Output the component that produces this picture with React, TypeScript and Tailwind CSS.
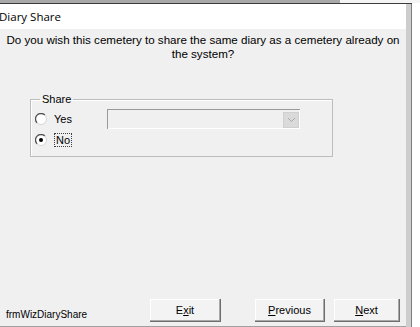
import React from "react";

const Radio = ({ checked }: { checked: boolean }) => (
  <svg width="12" height="12" viewBox="0 0 12 12" className="shrink-0">
    <circle cx="6" cy="6" r="5.5" fill="#ffffff" />
    <path d="M2.1 9.9 A5.5 5.5 0 0 1 9.9 2.1" fill="none" stroke="#505050" strokeWidth="1.3" />
    <path d="M9.9 2.1 A5.5 5.5 0 0 1 2.1 9.9" fill="none" stroke="#d4d4d4" strokeWidth="1" />
    {checked && <circle cx="6" cy="6" r="2" fill="#000000" />}
  </svg>
);

const WinButton = ({ width, children }: { width: string; children: React.ReactNode }) => (
  <button
    className={`${width} h-[23px] bg-[#f3f3f3] border-r border-b border-[#6e6e6e] shadow-[inset_-1px_-1px_#a9a9a9,inset_1px_1px_#ffffff] text-[11px] text-black leading-none flex items-center justify-center`}
  >
    {children}
  </button>
);

export default function App() {
  return (
    <div className="w-[420px] h-[327px] bg-white overflow-hidden flex flex-col font-['Liberation_Sans',Arial,sans-serif] text-black">
      {/* top edge */}
      <div className="flex h-[3px]">
        <div className="w-[340px] bg-[#a8a8a8]" />
        <div className="flex-1 bg-[#f4f4f4]" />
      </div>
      <div className="w-[412px] h-px bg-[#3c3c3c]" />

      <div className="flex flex-1 min-h-0">
        <div className="w-[406px] flex flex-col">
          {/* title bar */}
          <div className="h-[25px] bg-white flex items-center -ml-[1px]">
            <span className="text-[11.5px] font-['Open_Sans',sans-serif]">Diary Share</span>
          </div>

          {/* body */}
          <div className="flex-1 bg-[#f0f0f0] flex flex-col">
            <p className="pt-[4px] text-center text-[11.6px] leading-[14px]">
              Do you wish this cemetery to share the same diary as a cemetery already on
              <br />
              the system?
            </p>

            <fieldset className="ml-[30px] mt-[32px] w-[303px] border border-[#bdbdbd] shadow-[inset_1px_1px_#ffffff] pl-[4px] pb-[9px]">
              <legend className="ml-[5px] px-[2px] text-[11px] leading-[13px]">Share</legend>
              <div className="flex items-center h-[20px] mt-[3px]">
                <div className="w-[72px] flex items-center gap-[7px]">
                  <Radio checked={false} />
                  <span className="text-[11px]">Yes</span>
                </div>
                <div className="w-[193px] h-[20px] bg-[#f0f0f0] border-t border-l border-[#9a9a9a] shadow-[inset_-1px_-1px_#ffffff] flex justify-end items-center pr-[1px]">
                  <div className="w-[16px] h-[16px] bg-[#dadada] border border-[#d0d0d0] flex items-center justify-center">
                    <svg width="9" height="6" viewBox="0 0 9 6">
                      <path d="M1 1 L4.5 4.5 L8 1" fill="none" stroke="#a8a8a8" strokeWidth="1" />
                    </svg>
                  </div>
                </div>
              </div>
              <div className="flex items-center h-[14px] mt-[4px] gap-[7px]">
                <Radio checked={true} />
                <span className="text-[11px] leading-[12px] border border-dotted border-[#404040] px-px">No</span>
              </div>
            </fieldset>

            <div className="flex-1" />

            <div className="flex items-center h-[23px] mb-[4px]">
              <span className="w-[150px] pl-[6px] pt-[8px] text-[10px]">frmWizDiaryShare</span>
              <WinButton width="w-[71px]">
                <span>
                  E<span className="underline">x</span>it
                </span>
              </WinButton>
              <div className="w-[34px]" />
              <WinButton width="w-[70px]">
                <span>
                  <span className="underline">P</span>revious
                </span>
              </WinButton>
              <div className="w-[9px]" />
              <WinButton width="w-[66px]">
                <span>
                  <span className="underline">N</span>ext
                </span>
              </WinButton>
            </div>
            <div className="h-px bg-[#a0a0a0]" />
          </div>
        </div>
        <div className="w-[5px] bg-[#cdcdcd]" />
        <div className="w-px bg-[#7c7c7c]" />
        <div className="flex-1 bg-white" />
      </div>
    </div>
  );
}
